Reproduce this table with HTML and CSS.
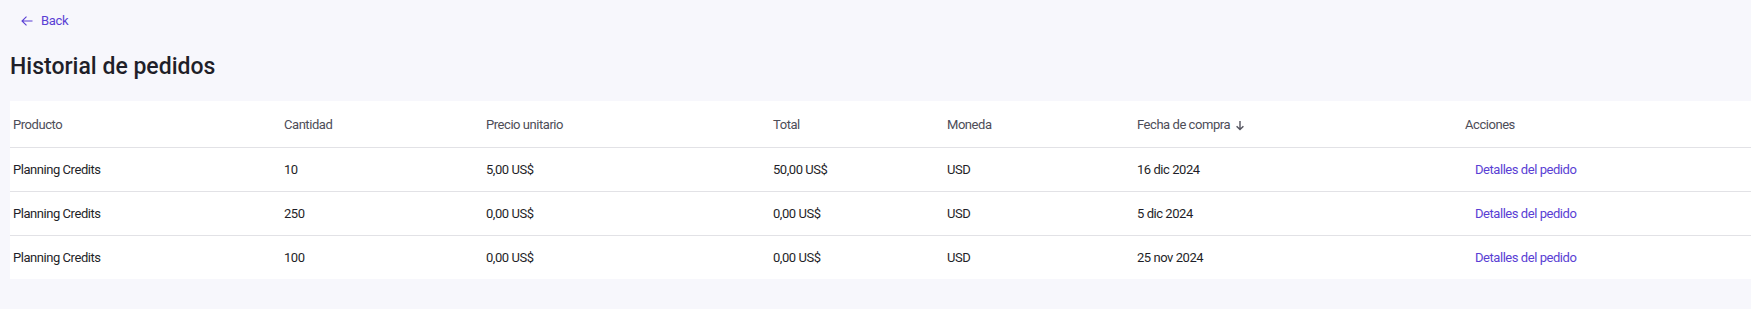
FILE: index.html
```html
<!DOCTYPE html>
<html lang="es">
<head>
<meta charset="utf-8">
<link rel="stylesheet" href="styles.css">
</head>
<body>
<div class="page">
  <a class="back" href="#">
    <svg class="back-icon" width="12" height="10" viewBox="0 0 12 10" fill="none" stroke="currentColor" stroke-width="1.1"><path d="M11.5 5H1M5.5 0.6L1 5l4.5 4.4"/></svg>
    <span>Back</span>
  </a>
  <h1 class="title">Historial de pedidos</h1>
  <table class="orders">
    <colgroup>
      <col class="c-prod"><col class="c-qty"><col class="c-price"><col class="c-total"><col class="c-cur"><col class="c-date"><col class="c-act">
    </colgroup>
    <thead>
      <tr>
        <th>Producto</th>
        <th>Cantidad</th>
        <th>Precio unitario</th>
        <th>Total</th>
        <th>Moneda</th>
        <th>Fecha de compra <svg class="sort" width="10" height="11" viewBox="0 0 10 11" fill="none" stroke="currentColor" stroke-width="1.4"><path d="M5 1v8.5M1.6 6.2L5 9.6l3.4-3.4"/></svg></th>
        <th>Acciones</th>
      </tr>
    </thead>
    <tbody>
      <tr>
        <td>Planning Credits</td><td>10</td><td>5,00 US$</td><td>50,00 US$</td><td>USD</td><td>16 dic 2024</td><td><a class="link" href="#">Detalles del pedido</a></td>
      </tr>
      <tr>
        <td>Planning Credits</td><td>250</td><td>0,00 US$</td><td>0,00 US$</td><td>USD</td><td>5 dic 2024</td><td><a class="link" href="#">Detalles del pedido</a></td>
      </tr>
      <tr>
        <td>Planning Credits</td><td>100</td><td>0,00 US$</td><td>0,00 US$</td><td>USD</td><td>25 nov 2024</td><td><a class="link" href="#">Detalles del pedido</a></td>
      </tr>
    </tbody>
  </table>
</div>
</body>
</html>
```
FILE: styles.css
```css
html, body {
  margin: 0;
  padding: 0;
  background: #f7f7fc;
  font-family: Roboto, "Liberation Sans", sans-serif;
  color: #1f1f29;
}
.page {
  padding: 11px 0 0 10px;
}
.back {
  display: inline-flex;
  align-items: center;
  gap: 8px;
  margin-left: 11px;
  color: #5a3fd4;
  text-decoration: none;
  font-size: 13px;
  line-height: 16px;
  letter-spacing: -0.3px;
}
.back-icon {
  display: block;
}
.title {
  margin: 23px 0 0 0;
  font-size: 23px;
  line-height: 28px;
  font-weight: 500;
  color: #1f1f29;
}
.orders {
  margin-top: 20px;
  width: 100%;
  border-collapse: collapse;
  background: #fff;
  table-layout: fixed;
  font-size: 13px;
  letter-spacing: -0.45px;
}
.orders th {
  text-align: left;
  font-weight: 400;
  color: #4d4d58;
  height: 46px;
  padding: 0 0 0 3px;
  border-bottom: 1px solid #e2e2e6;
  white-space: nowrap;
}
.orders td {
  height: 43px;
  padding: 0 0 0 3px;
  color: #1f1f29;
  white-space: nowrap;
}
.orders tbody tr + tr td {
  border-top: 1px solid #e2e2e6;
}
.c-prod { width: 271px; }
.c-qty { width: 202px; }
.c-price { width: 287px; }
.c-total { width: 174px; }
.c-cur { width: 190px; }
.c-date { width: 328px; }
.sort {
  vertical-align: -2px;
  margin-left: 2px;
  color: #555560;
}
.link {
  display: inline-block;
  margin-left: 10px;
  color: #5a3fd4;
  text-decoration: none;
}
```
